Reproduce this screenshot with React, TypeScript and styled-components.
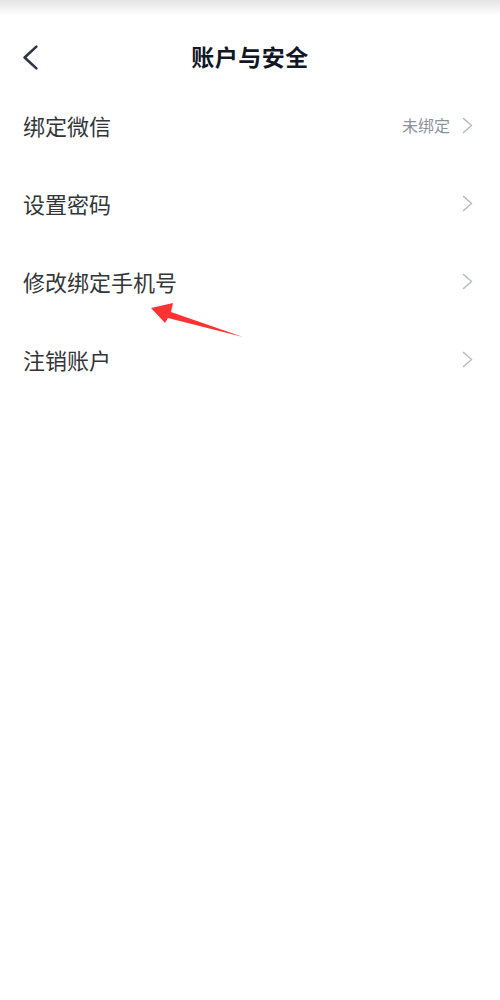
import React from 'react';
import styled, { createGlobalStyle } from 'styled-components';

const GlobalStyle = createGlobalStyle`
    html, body {
        margin: 0;
        padding: 0;
        background: #ffffff;
        font-family: "Noto Sans CJK SC", "Noto Sans", sans-serif;
    }
`;

interface IMenuItem {
    label: string,
    value?: string,
}

const items: IMenuItem[] = [
    { label: '绑定微信', value: '未绑定' },
    { label: '设置密码' },
    { label: '修改绑定手机号' },
    { label: '注销账户' },
];

const Chevron = ({ left, color, width, height, stroke }: { left?: boolean, color: string, width: number, height: number, stroke: number }) => (
    <svg width={width} height={height} viewBox={`0 0 ${width} ${height}`} fill='none'>
        <path
            d={left
                ? `M${width - stroke} ${stroke} L${stroke} ${height / 2} L${width - stroke} ${height - stroke}`
                : `M${stroke} ${stroke} L${width - stroke} ${height / 2} L${stroke} ${height - stroke}`}
            stroke={color}
            strokeWidth={stroke}
            strokeLinecap='round'
            strokeLinejoin='round'
        />
    </svg>
);

export default function App() {
    return (
        <Page>
            <GlobalStyle />
            <StatusShade />
            <Header>
                <BackButton>
                    <Chevron left color='#2d3442' width={17} height={27} stroke={2.6} />
                </BackButton>
                <Title>账户与安全</Title>
            </Header>
            <List>
                {items.map((item) => (
                    <Row key={item.label}>
                        <Label>{item.label}</Label>
                        <Right>
                            {item.value && <Value>{item.value}</Value>}
                            <Chevron color='#b7bbc2' width={11} height={17} stroke={1.4} />
                        </Right>
                    </Row>
                ))}
            </List>
            <Annotation width='110' height='45' viewBox='0 0 110 45'>
                <polygon
                    points='1,13 23,8 21,17 93,42 18,23 15,28'
                    fill='#ff3333'
                />
            </Annotation>
        </Page>
    );
}

const Page = styled.div`
    position: relative;
    width: 500px;
    height: 1000px;
    background: #ffffff;
    overflow: hidden;
`;

const StatusShade = styled.div`
    height: 16px;
    background: linear-gradient(#e4e4e4, #f8f8f8 70%, #ffffff);
`;

const Header = styled.div`
    display: flex;
    align-items: center;
    justify-content: center;
    height: 60px;
    margin-top: 10px;
    position: relative;
`;

const BackButton = styled.div`
    position: absolute;
    left: 22px;
    top: 18px;
    display: flex;
`;

const Title = styled.h1`
    margin: 0;
    font-size: 23px;
    font-weight: 700;
    color: #121626;
    letter-spacing: 0.5px;
`;

const List = styled.div`
    display: flex;
    flex-direction: column;
`;

const Row = styled.div`
    display: flex;
    align-items: center;
    justify-content: space-between;
    height: 78px;
    padding: 0 27px 0 23px;
`;

const Label = styled.span`
    font-size: 22px;
    color: #333538;
`;

const Right = styled.div`
    display: flex;
    align-items: center;
    gap: 12px;
`;

const Value = styled.span`
    font-size: 16px;
    color: #8c929b;
`;

const Annotation = styled.svg`
    position: absolute;
    left: 150px;
    top: 295px;
`;
